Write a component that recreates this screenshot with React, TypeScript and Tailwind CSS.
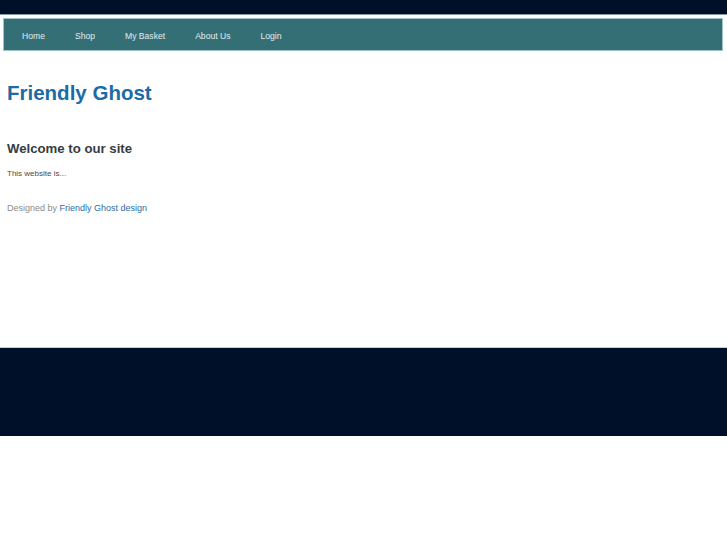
import React from 'react';

const NAV = ['Home', 'Shop', 'My Basket', 'About Us', 'Login'];

export default function App() {
  return (
    <div className="w-[727px] h-[545px] bg-white font-['Liberation_Sans',Arial,sans-serif]">
      <div className="h-[14px] bg-[#001029]" />
      <div className="h-px bg-[#8a96a4]" />
      <div className="pt-[3px] pl-[3px] pr-[4px]">
        <nav className="h-[33px] bg-[#346f76] border border-[#9fc3c7] flex items-center pl-[18px] pt-[4px]">
          {NAV.map((item) => (
            <a key={item} className="text-[8.6px] text-[#e2ecee] mr-[30px]">
              {item}
            </a>
          ))}
        </nav>
      </div>

      <div className="px-[7px] h-[296px]">
        <h1 className="pt-[30px] text-[20.5px] leading-[24px] font-bold text-[#1d6aa5]">Friendly Ghost</h1>
        <h2 className="mt-[35px] text-[13.2px] leading-[18px] font-bold text-[#353d43]">Welcome to our site</h2>
        <p className="mt-[11px] text-[8px] leading-[10px] text-[#4a4a4a]">This website is...</p>
        <p className="mt-[23px] text-[9px] leading-[12px] text-[#8b8b8b]">
          Designed by <a className="text-[#2a6fa8]">Friendly Ghost design</a>
        </p>
      </div>

      <div className="h-px bg-[#c9ced6]" />
      <div className="h-[88px] bg-[#001029]" />
    </div>
  );
}
